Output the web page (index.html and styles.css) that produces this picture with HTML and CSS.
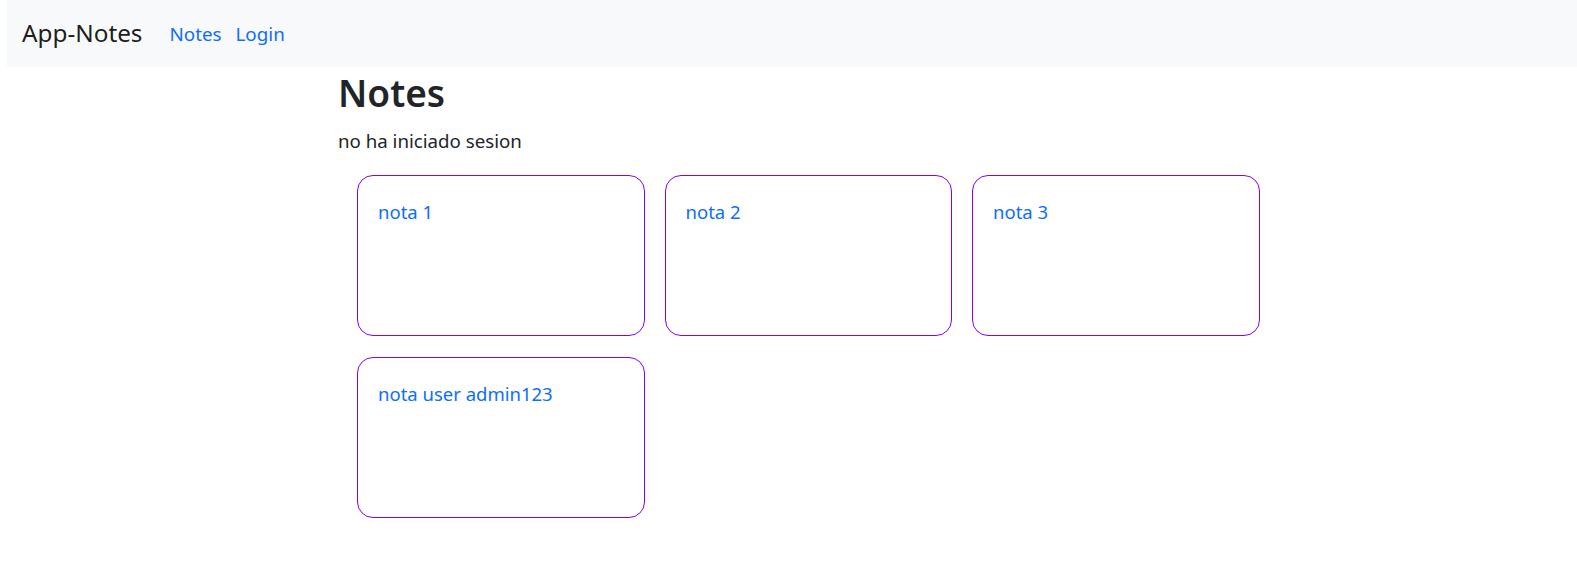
FILE: index.html
```html
<!DOCTYPE html>
<html lang="es">
<head>
<meta charset="utf-8">
<title>App-Notes</title>
<link rel="stylesheet" href="styles.css">
</head>
<body>
<nav class="navbar">
  <a class="brand" href="#">App-Notes</a>
  <div class="nav-links">
    <a class="nav-link" href="#">Notes</a>
    <a class="nav-link" href="#">Login</a>
  </div>
</nav>
<main class="page">
  <h1 class="title">Notes</h1>
  <p class="status">no ha iniciado sesion</p>
  <div class="notes">
    <div class="note"><a class="note-link" href="#">nota 1</a></div>
    <div class="note"><a class="note-link" href="#">nota 2</a></div>
    <div class="note"><a class="note-link" href="#">nota 3</a></div>
    <div class="note"><a class="note-link" href="#">nota user admin123</a></div>
  </div>
</main>
</body>
</html>
```
FILE: styles.css
```css
* { box-sizing: border-box; }
body {
  margin: 0;
  font-family: "Noto Sans", sans-serif;
  color: #212529;
  background: #fff;
}
a { text-decoration: none; }
.navbar {
  margin-left: 7px;
  height: 67px;
  background: #f8f9fa;
  display: flex;
  align-items: center;
  padding-left: 15px;
}
.brand {
  font-size: 24.3px;
  color: rgba(0,0,0,0.9);
  margin-right: 27px;
  line-height: 1.5;
}
.nav-links {
  display: flex;
  gap: 14px;
  padding-top: 1px;
}
.nav-link {
  font-size: 18.8px;
  color: #0d6efd;
  line-height: 1.5;
}
.page {
  max-width: 940px;
  margin: 0 auto;
  padding-left: 19.5px;
}
.title {
  margin: 4px 0 12px;
  font-size: 37px;
  font-weight: 600;
  line-height: 1.2;
}
.status {
  margin: 0 0 20px;
  font-size: 18.7px;
  line-height: 1.5;
}
.notes {
  margin-left: 19px;
  display: grid;
  grid-template-columns: repeat(3, 287.5px);
  column-gap: 20px;
  row-gap: 21px;
}
.note {
  height: 161px;
  border: 1px solid #8000ff;
  border-radius: 16px;
  padding: 22px 20px;
}
.note-link {
  font-size: 18.5px;
  line-height: 1.5;
  color: #0d6efd;
}
```
